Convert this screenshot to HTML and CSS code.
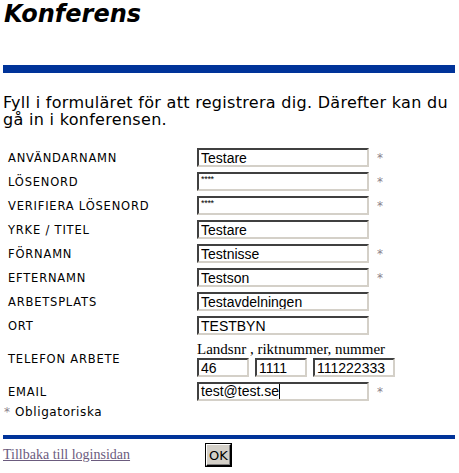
FILE: index.html
```html
<!DOCTYPE html>
<html>
<head>
<meta charset="utf-8">
<link rel="stylesheet" href="styles.css">
</head>
<body>
<h1 class="title">Konferens</h1>
<div class="bar top-bar"></div>
<p class="intro">Fyll i formuläret för att registrera dig. Därefter kan du gå in i konferensen.</p>
<form class="form">
  <div class="row"><span class="label">ANVÄNDARNAMN</span><span class="field"><input class="input" value="Testare"></span><span class="req">*</span></div>
  <div class="row"><span class="label">LÖSENORD</span><span class="field"><span class="input pw">****</span></span><span class="req">*</span></div>
  <div class="row"><span class="label">VERIFIERA LÖSENORD</span><span class="field"><span class="input pw">****</span></span><span class="req">*</span></div>
  <div class="row"><span class="label">YRKE / TITEL</span><span class="field"><input class="input" value="Testare"></span><span class="req"></span></div>
  <div class="row"><span class="label">FÖRNAMN</span><span class="field"><input class="input" value="Testnisse"></span><span class="req">*</span></div>
  <div class="row"><span class="label">EFTERNAMN</span><span class="field"><input class="input" value="Testson"></span><span class="req">*</span></div>
  <div class="row"><span class="label">ARBETSPLATS</span><span class="field"><input class="input" value="Testavdelningen"></span><span class="req"></span></div>
  <div class="row"><span class="label">ORT</span><span class="field"><input class="input" value="TESTBYN"></span><span class="req"></span></div>
  <div class="row phone-row"><span class="label">TELEFON ARBETE</span>
    <span class="field phone-field">
      <span class="hint">Landsnr , riktnummer, nummer</span>
      <span class="phones"><input class="input p1" value="46"><input class="input p2" value="1111"><input class="input p3" value="111222333"></span>
    </span><span class="req"></span></div>
  <div class="row"><span class="label">EMAIL</span><span class="field"><span class="input email">test@test.se<span class="caret"></span></span></span><span class="req">*</span></div>
</form>
<div class="note"><span class="req-inline">*</span> Obligatoriska</div>
<div class="bar bottom-bar"></div>
<div class="footer">
  <a class="back" href="#">Tillbaka till loginsidan</a>
  <button class="ok" type="button">OK</button>
</div>
</body>
</html>
```

FILE: styles.css
```css
html, body {
  margin: 0;
  padding: 0;
  background: #fff;
}
body {
  padding: 0 3px;
  font-family: "DejaVu Sans", Verdana, sans-serif;
  color: #000;
}
.title {
  margin: 0;
  padding-top: 1px;
  padding-left: 1px;
  font-family: "DejaVu Sans", Verdana, sans-serif;
  font-size: 24px;
  font-weight: bold;
  font-style: italic;
  line-height: 27px;
}
.bar {
  background: #003399;
  width: 452px;
}
.top-bar {
  margin-top: 37px;
  height: 8px;
}
.intro {
  margin: 21px 0 0 0;
  font-size: 16px;
  line-height: 17px;
  letter-spacing: 0.3px;
}
.form {
  margin-top: 20px;
  display: flex;
  flex-direction: column;
  gap: 5px;
  padding-left: 5px;
}
.row {
  display: flex;
  align-items: center;
  height: 19px;
}
.label {
  width: 189px;
  flex: none;
  font-size: 11.5px;
  letter-spacing: 0.8px;
}
.field {
  width: 172px;
  flex: none;
}
.input {
  box-sizing: border-box;
  display: block;
  width: 172px;
  height: 19px;
  margin: 0;
  padding: 0 2px;
  border: 2px solid;
  border-color: #404040 #d4d0c8 #d4d0c8 #404040;
  font-family: "Liberation Sans", Arial, sans-serif;
  font-size: 14px;
  line-height: 15px;
  background: #fff;
  color: #000;
}
.pw {
  font-size: 9px;
  line-height: 8px;
  padding-top: 1px;
  letter-spacing: -0.3px;
}
.caret {
  display: inline-block;
  width: 1px;
  height: 15px;
  background: #000;
  vertical-align: -3px;
}
.req {
  margin-left: 8px;
  color: #8a7f8a;
  font-size: 12px;
}
.phone-row {
  height: 37px;
  align-items: flex-end;
}
.phone-row .label {
  align-self: center;
}
.phone-field {
  display: flex;
  flex-direction: column;
  width: 200px;
}
.hint {
  font-family: "Liberation Serif", "Times New Roman", serif;
  font-size: 15px;
  line-height: 18px;
  white-space: nowrap;
}
.phones {
  display: flex;
  gap: 6px;
}
.p1 { width: 52px; }
.p2 { width: 52px; }
.p3 { width: 82px; }
.note {
  margin-top: 4px;
  padding-left: 1px;
  font-size: 12px;
  line-height: 15px;
  letter-spacing: 0.6px;
}
.req-inline {
  color: #8a7f8a;
}
.bottom-bar {
  margin-top: 15px;
  height: 4px;
}
.footer {
  display: flex;
  align-items: center;
  margin-top: 4px;
}
.back {
  width: 202px;
  font-family: "Liberation Serif", "Times New Roman", serif;
  font-size: 14px;
  color: #6b5b7e;
  text-decoration: underline;
}
.ok {
  box-sizing: border-box;
  width: 27px;
  height: 24px;
  padding: 0;
  font-family: "DejaVu Sans", Verdana, sans-serif;
  font-size: 13px;
  background: #d4d0c8;
  border: 2px solid;
  border-color: #fff #000 #000 #fff;
  outline: 1px solid #000;
  outline-offset: -1px;
  box-shadow: inset -1px -1px 0 #808080;
  color: #000;
}
```
